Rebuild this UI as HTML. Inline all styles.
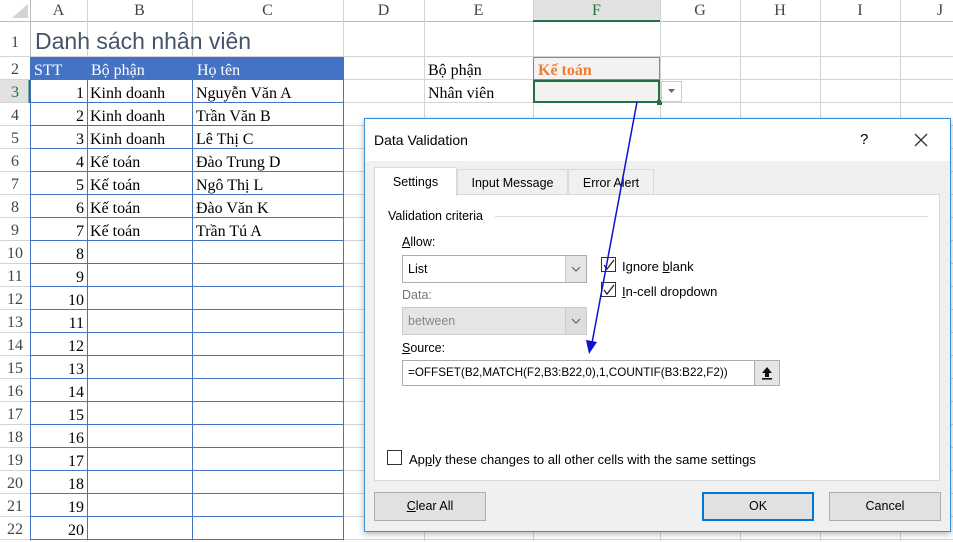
<!DOCTYPE html>
<html><head><meta charset="utf-8"><style>
*{margin:0;padding:0;box-sizing:border-box}
body{width:953px;height:541px;overflow:hidden;background:#fff;position:relative;font-family:"Liberation Serif",serif}
.a{position:absolute;white-space:nowrap}
.ch{position:absolute;top:0;height:22px;line-height:22px;text-align:center;font-family:"Liberation Serif",serif;font-size:16px;color:#444}
.rh{position:absolute;left:0;width:30px;text-align:center;font-size:16px;color:#444;line-height:23px}
.c{position:absolute;font-size:16px;color:#000;line-height:23px;height:23px}
.d{font-family:"Liberation Sans",sans-serif;font-size:12.5px;color:#000}
.u{text-decoration:underline}
.cb{position:absolute;width:15px;height:15px;border:1px solid #333;background:#fff}
.btn{position:absolute;height:29px;background:#e1e1e1;border:1px solid #adadad;text-align:center;line-height:27px}
</style></head><body>
<svg class="a" style="left:0;top:0" width="953" height="541">
<rect x="0" y="0" width="953" height="22" fill="#fff"/>
<rect x="533" y="0" width="127" height="22" fill="#e1e1e1"/>
<rect x="0" y="80" width="30" height="23" fill="#e1e1e1"/>
<polygon points="12,18 28,18 28,4" fill="#d4d4d4"/>
<g stroke="#d4d4d4" stroke-width="1">
<line x1="0" y1="21.5" x2="953" y2="21.5" stroke="#bbb"/>
<line x1="0" y1="56.5" x2="953" y2="56.5"/><line x1="0" y1="79.5" x2="953" y2="79.5"/>
<line x1="0" y1="102.5" x2="953" y2="102.5"/><line x1="0" y1="125.5" x2="953" y2="125.5"/>
<line x1="0" y1="148.5" x2="953" y2="148.5"/><line x1="0" y1="171.5" x2="953" y2="171.5"/>
<line x1="0" y1="194.5" x2="953" y2="194.5"/><line x1="0" y1="217.5" x2="953" y2="217.5"/>
<line x1="0" y1="240.5" x2="953" y2="240.5"/><line x1="0" y1="263.5" x2="953" y2="263.5"/>
<line x1="0" y1="286.5" x2="953" y2="286.5"/><line x1="0" y1="309.5" x2="953" y2="309.5"/>
<line x1="0" y1="332.5" x2="953" y2="332.5"/><line x1="0" y1="355.5" x2="953" y2="355.5"/>
<line x1="0" y1="378.5" x2="953" y2="378.5"/><line x1="0" y1="401.5" x2="953" y2="401.5"/>
<line x1="0" y1="424.5" x2="953" y2="424.5"/><line x1="0" y1="447.5" x2="953" y2="447.5"/>
<line x1="0" y1="470.5" x2="953" y2="470.5"/><line x1="0" y1="493.5" x2="953" y2="493.5"/>
<line x1="0" y1="516.5" x2="953" y2="516.5"/><line x1="0" y1="539.5" x2="953" y2="539.5"/>
<line x1="30.5" y1="0" x2="30.5" y2="541" stroke="#bbb"/>
<line x1="87.5" y1="0" x2="87.5" y2="541"/><line x1="192.5" y1="0" x2="192.5" y2="541"/>
<line x1="343.5" y1="0" x2="343.5" y2="541"/><line x1="424.5" y1="0" x2="424.5" y2="541"/>
<line x1="533.5" y1="0" x2="533.5" y2="541"/><line x1="660.5" y1="0" x2="660.5" y2="541"/>
<line x1="740.5" y1="0" x2="740.5" y2="541"/><line x1="820.5" y1="0" x2="820.5" y2="541"/>
<line x1="900.5" y1="0" x2="900.5" y2="541"/>
</g>
<line x1="533" y1="21" x2="660" y2="21" stroke="#217346" stroke-width="2"/>
<line x1="29.5" y1="80" x2="29.5" y2="103" stroke="#217346" stroke-width="2"/>
<rect x="30" y="57" width="313" height="23" fill="#4472c4"/>
<g stroke="#4472c4" stroke-width="1">
<line x1="30.5" y1="80" x2="30.5" y2="540"/><line x1="87.5" y1="80" x2="87.5" y2="540"/>
<line x1="192.5" y1="80" x2="192.5" y2="540"/><line x1="343.5" y1="57" x2="343.5" y2="540"/>
<line x1="30" y1="102.5" x2="343" y2="102.5"/><line x1="30" y1="125.5" x2="343" y2="125.5"/>
<line x1="30" y1="148.5" x2="343" y2="148.5"/><line x1="30" y1="171.5" x2="343" y2="171.5"/>
<line x1="30" y1="194.5" x2="343" y2="194.5"/><line x1="30" y1="217.5" x2="343" y2="217.5"/>
<line x1="30" y1="240.5" x2="343" y2="240.5"/><line x1="30" y1="263.5" x2="343" y2="263.5"/>
<line x1="30" y1="286.5" x2="343" y2="286.5"/><line x1="30" y1="309.5" x2="343" y2="309.5"/>
<line x1="30" y1="332.5" x2="343" y2="332.5"/><line x1="30" y1="355.5" x2="343" y2="355.5"/>
<line x1="30" y1="378.5" x2="343" y2="378.5"/><line x1="30" y1="401.5" x2="343" y2="401.5"/>
<line x1="30" y1="424.5" x2="343" y2="424.5"/><line x1="30" y1="447.5" x2="343" y2="447.5"/>
<line x1="30" y1="470.5" x2="343" y2="470.5"/><line x1="30" y1="493.5" x2="343" y2="493.5"/>
<line x1="30" y1="516.5" x2="343" y2="516.5"/><line x1="30" y1="539.5" x2="343" y2="539.5"/>
</g>
<rect x="533.5" y="57.5" width="126" height="22" fill="#f2f2f2" stroke="#888"/>
<rect x="534" y="81" width="125" height="21" fill="#f2f2f2" stroke="#217346" stroke-width="2"/>
<rect x="657" y="100" width="5" height="5" fill="#217346"/>
<rect x="661.5" y="81.5" width="20" height="20" fill="#fff" stroke="#ccc"/>
<polygon points="668,89 675,89 671.5,93" fill="#666"/>
</svg>
<div class="ch" style="left:30px;width:57px">A</div><div class="ch" style="left:87px;width:105px">B</div>
<div class="ch" style="left:192px;width:151px">C</div><div class="ch" style="left:343px;width:81px">D</div>
<div class="ch" style="left:424px;width:109px">E</div><div class="ch" style="left:533px;width:127px;color:#217346">F</div>
<div class="ch" style="left:660px;width:80px">G</div><div class="ch" style="left:740px;width:80px">H</div>
<div class="ch" style="left:820px;width:80px">I</div><div class="ch" style="left:900px;width:80px">J</div>
<div style="position:absolute;left:0;top:1px;width:100%">
<div class="rh" style="top:30px">1</div><div class="rh" style="top:57px">2</div><div class="rh" style="top:80px;color:#217346">3</div>
<div class="rh" style="top:103px">4</div><div class="rh" style="top:126px">5</div><div class="rh" style="top:149px">6</div>
<div class="rh" style="top:172px">7</div><div class="rh" style="top:195px">8</div><div class="rh" style="top:218px">9</div>
<div class="rh" style="top:241px">10</div><div class="rh" style="top:264px">11</div><div class="rh" style="top:287px">12</div>
<div class="rh" style="top:310px">13</div><div class="rh" style="top:333px">14</div><div class="rh" style="top:356px">15</div>
<div class="rh" style="top:379px">16</div><div class="rh" style="top:402px">17</div><div class="rh" style="top:425px">18</div>
<div class="rh" style="top:448px">19</div><div class="rh" style="top:471px">20</div><div class="rh" style="top:494px">21</div>
<div class="rh" style="top:517px">22</div>
</div>
<div class="a" style="left:35px;top:28px;font-family:'Liberation Sans',sans-serif;font-size:23px;color:#44546a;font-weight:300">Danh sách nhân viên</div>
<div style="position:absolute;left:0;top:2px;width:100%">
<div class="c" style="left:34px;top:57px;color:#fff">STT</div>
<div class="c" style="left:91px;top:57px;color:#fff">Bộ phận</div>
<div class="c" style="left:197px;top:57px;color:#fff">Họ tên</div>
<div class="c" style="left:428px;top:57px">Bộ phận</div>
<div class="c" style="left:538px;top:57px;color:#ed7d31;font-weight:bold">Kế toán</div>
<div class="c" style="left:428px;top:80px">Nhân viên</div>
<div class="a" style="left:30px;top:80px;width:54px;text-align:right;font-size:16px;line-height:23px">1<br>2<br>3<br>4<br>5<br>6<br>7<br>8<br>9<br>10<br>11<br>12<br>13<br>14<br>15<br>16<br>17<br>18<br>19<br>20</div>
<div class="a" style="left:90px;top:80px;font-size:16px;line-height:23px">Kinh doanh<br>Kinh doanh<br>Kinh doanh<br>Kế toán<br>Kế toán<br>Kế toán<br>Kế toán</div>
<div class="a" style="left:196px;top:80px;font-size:16px;line-height:23px">Nguyễn Văn A<br>Trần Văn B<br>Lê Thị C<br>Đào Trung D<br>Ngô Thị L<br>Đào Văn K<br>Trần Tú A</div>
</div>

<div class="a d" style="left:364px;top:118px;width:587px;height:414px;background:#f0f0f0;border:1px solid #3c8fd6;box-shadow:0 2px 6px rgba(0,0,0,.3)">
 <div class="a" style="left:0;top:0;width:585px;height:42px;background:#fff"></div>
 <div class="a" style="left:9px;top:13px;font-size:14px">Data Validation</div>
 <div class="a" style="left:495px;top:12px;font-size:15px">?</div>
 <svg class="a" style="left:549px;top:14px" width="14" height="14"><path d="M1 1L13 13M13 1L1 13" stroke="#333" stroke-width="1.3"/></svg>
 <div class="a" style="left:9px;top:75px;width:566px;height:287px;background:#fff;border:1px solid #d9d9d9"></div>
 <div class="a" style="left:9px;top:48px;width:83px;height:29px;background:#fff;border:1px solid #d9d9d9;border-bottom:none;text-align:center;line-height:28px">Settings</div>
 <div class="a" style="left:92px;top:50px;width:111px;height:26px;border:1px solid #d9d9d9;text-align:center;line-height:26px">Input Message</div>
 <div class="a" style="left:203px;top:50px;width:86px;height:26px;border:1px solid #d9d9d9;text-align:center;line-height:26px">Error Alert</div>
 <div class="a" style="left:23px;top:90px">Validation criteria</div>
 <div class="a" style="left:130px;top:97px;width:433px;height:1px;background:#dcdcdc"></div>
 <div class="a" style="left:37px;top:116px"><span class="u">A</span>llow:</div>
 <div class="a" style="left:37px;top:136px;width:185px;height:28px;background:#fff;border:1px solid #adadad"><span class="a" style="left:5px;top:6px">List</span><div class="a" style="right:0;top:0;width:21px;height:26px;background:#e5e5e5;border-left:1px solid #ccc"></div><svg class="a" style="right:5px;top:10px" width="10" height="6"><path d="M1 1L5 5L9 1" stroke="#555" fill="none"/></svg></div>
 <div class="a" style="left:37px;top:169px;color:#777">Data:</div>
 <div class="a" style="left:37px;top:188px;width:185px;height:28px;background:#e5e5e5;border:1px solid #ccc"><span class="a" style="left:5px;top:6px;color:#888">between</span><div class="a" style="right:0;top:0;width:21px;height:26px;background:#ddd;border-left:1px solid #ccc"></div><svg class="a" style="right:5px;top:10px" width="10" height="6"><path d="M1 1L5 5L9 1" stroke="#555" fill="none"/></svg></div>
 <div class="cb" style="left:236px;top:138px"></div><svg class="a" style="left:237px;top:139px" width="14" height="14"><path d="M2 7L5 11L12 2" stroke="#222" fill="none" stroke-width="1.3"/></svg>
 <div class="a" style="left:257px;top:140px;font-size:13px">Ignore <span class="u">b</span>lank</div>
 <div class="cb" style="left:236px;top:163px"></div><svg class="a" style="left:237px;top:164px" width="14" height="14"><path d="M2 7L5 11L12 2" stroke="#222" fill="none" stroke-width="1.3"/></svg>
 <div class="a" style="left:257px;top:165px;font-size:13px"><span class="u">I</span>n-cell dropdown</div>
 <div class="a" style="left:37px;top:222px"><span class="u">S</span>ource:</div>
 <div class="a" style="left:37px;top:241px;width:378px;height:26px;background:#fff;border:1px solid #adadad"><span class="a" style="left:5px;top:5px;font-size:11.7px">=OFFSET(B2,MATCH(F2,B3:B22,0),1,COUNTIF(B3:B22,F2))</span><div class="a" style="right:0;top:0;width:25px;height:24px;background:#e5e5e5;border-left:1px solid #adadad"></div><svg class="a" style="right:6px;top:5px" width="12" height="14"><path d="M6 1L1 7H4V11H8V7H11Z" fill="#111"/><rect x="1" y="12" width="10" height="1.6" fill="#111"/></svg></div>
 <div class="cb" style="left:22px;top:331px"></div>
 <div class="a" style="left:44px;top:333px;font-size:13px">Ap<span class="u">p</span>ly these changes to all other cells with the same settings</div>
 <div class="btn" style="left:9px;top:373px;width:112px"><span class="u">C</span>lear All</div>
 <div class="btn" style="left:337px;top:373px;width:112px;border:2px solid #0078d7;line-height:25px">OK</div>
 <div class="btn" style="left:464px;top:373px;width:112px">Cancel</div>
</div>
<svg class="a" style="left:0;top:0" width="953" height="541"><line x1="637" y1="102" x2="592" y2="343" stroke="#1010d0" stroke-width="1.5"/><polygon points="589,354 586,340 597,342" fill="#1010d0"/></svg>
</body></html>
